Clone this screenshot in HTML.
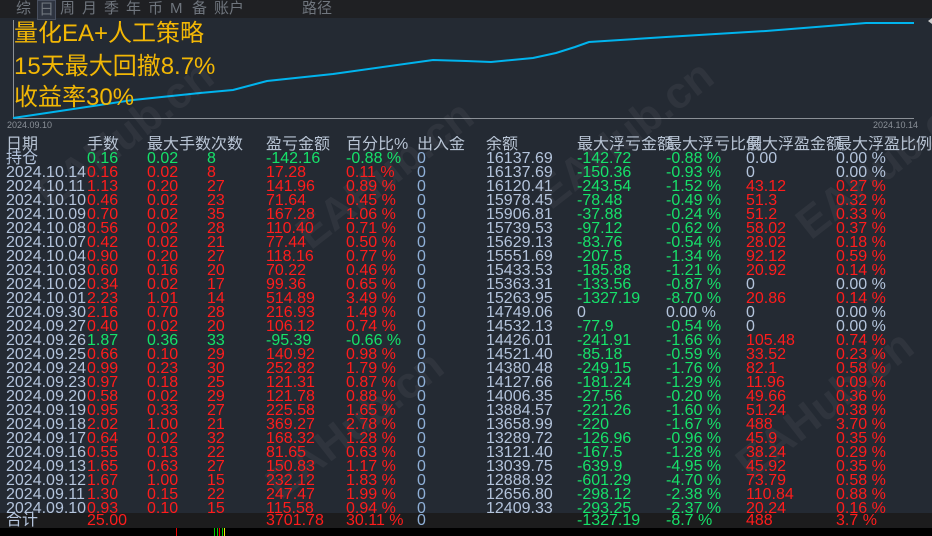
<!DOCTYPE html>
<html><head><meta charset="utf-8"><style>
*{margin:0;padding:0;box-sizing:border-box}
body{width:932px;height:536px;overflow:hidden;background:#242a33;font-family:"Liberation Sans","Noto Sans CJK SC",sans-serif;position:relative}
.top{position:absolute;left:0;top:0;width:932px;height:18px;background:#1f2023}
.top span{position:absolute;top:0;font-size:15px;line-height:18px;color:#6f757d}
.sel{border:1px solid #4a5160;background:#2e3440;padding:0 1px}
.ttl{position:absolute;left:14px;color:#f2b705;font-size:24px;line-height:28px;white-space:nowrap}
.ax{position:absolute;font-size:9px;color:#8a9098}
.tbl{position:absolute;left:0;top:136px;width:932px;height:377px;overflow:hidden}
.r{position:absolute;left:0;height:14px;width:932px;font-size:16px;line-height:14px;white-space:nowrap}
.r span{position:absolute;top:0}
.c0{left:6px}.c1{left:87px}.c2{left:147px}.c3{left:207px}.c4{left:266px}.c5{left:346px}.c6{left:417px}.c7{left:486px}.c8{left:577px}.c9{left:666px}.c10{left:746px}.c11{left:836px}
.h span{color:#b8c4d4}
.W{color:#b4c4dc}.R{color:#ff1c1c}.G{color:#16e26a}.Z{color:#8fb0d8}
.foot{position:absolute;left:0;top:513px;width:932px;height:15px;background:#1c1c1d}
.bot{position:absolute;left:0;top:528px;width:932px;height:8px;background:#000}
.wm{position:absolute;font-size:44px;font-weight:bold;color:rgba(255,255,255,0.05);transform:rotate(-38deg);white-space:nowrap}
</style></head><body>
<div class="top">
<span style="left:16px">综</span><span class="sel" style="left:37px">日</span><span style="left:60px">周</span><span style="left:82px">月</span><span style="left:104px">季</span><span style="left:126px">年</span><span style="left:148px">币</span><span style="left:170px">M</span><span style="left:192px">备</span><span style="left:214px">账户</span><span style="left:302px">路径</span>
</div>
<svg style="position:absolute;left:0;top:18px" width="932" height="110">
<line x1="13.5" y1="2" x2="13.5" y2="100" stroke="#8a8f96" stroke-width="1"/>
<line x1="13" y1="100.5" x2="914" y2="100.5" stroke="#8a8f96" stroke-width="1"/>
<polyline fill="none" stroke="#00b4ee" stroke-width="2" points="13,100 60,93 133,82 200,75 233,72 267,63 333,56 433,42 466,43 491,44 533,40 556,35 575,29 589,24 666,19 766,13 866,5 914,5"/>
<polygon points="928,3 932,0 932,6" fill="#ccc"/>
</svg>
<div class="ttl" style="top:20px">量化EA+人工策略</div>
<div class="ttl" style="top:53px">15天最大回撤8.7%</div>
<div class="ttl" style="top:84px">收益率30%</div>
<div class="ax" style="left:7px;top:120px">2024.09.10</div>
<div class="ax" style="left:873px;top:120px">2024.10.14</div>
<div class="wm" style="left:20px;top:110px">EAHub.cn</div>
<div class="wm" style="left:280px;top:150px">EAHub.cn</div>
<div class="wm" style="left:520px;top:110px">EAHub.cn</div>
<div class="wm" style="left:780px;top:140px">EAHub.cn</div>
<div class="wm" style="left:250px;top:400px">EAHub.cn</div>
<div class="wm" style="left:720px;top:380px">EAHub.cn</div>
<div class="tbl">
<div class="r h" style="top:2px"><span class="c0">日期</span><span class="c1">手数</span><span class="c2">最大手数次数</span><span class="c4">盈亏金额</span><span class="c5">百分比%</span><span class="c6">出入金</span><span class="c7">余额</span><span class="c8">最大浮亏金额</span><span class="c9">最大浮亏比例</span><span class="c10">最大浮盈金额</span><span class="c11">最大浮盈比例</span></div>
<div class="r" style="top:16px"><span class="c0 W">持仓</span><span class="c1 G">0.16</span><span class="c2 G">0.02</span><span class="c3 G">8</span><span class="c4 G">-142.16</span><span class="c5 G">-0.88 %</span><span class="c6 Z">0</span><span class="c7 W">16137.69</span><span class="c8 G">-142.72</span><span class="c9 G">-0.88 %</span><span class="c10 W">0.00</span><span class="c11 W">0.00 %</span></div>
<div class="r" style="top:30px"><span class="c0 W">2024.10.14</span><span class="c1 R">0.16</span><span class="c2 R">0.02</span><span class="c3 R">8</span><span class="c4 R">17.28</span><span class="c5 R">0.11 %</span><span class="c6 Z">0</span><span class="c7 W">16137.69</span><span class="c8 G">-150.36</span><span class="c9 G">-0.93 %</span><span class="c10 W">0</span><span class="c11 W">0.00 %</span></div>
<div class="r" style="top:44px"><span class="c0 W">2024.10.11</span><span class="c1 R">1.13</span><span class="c2 R">0.20</span><span class="c3 R">27</span><span class="c4 R">141.96</span><span class="c5 R">0.89 %</span><span class="c6 Z">0</span><span class="c7 W">16120.41</span><span class="c8 G">-243.54</span><span class="c9 G">-1.52 %</span><span class="c10 R">43.12</span><span class="c11 R">0.27 %</span></div>
<div class="r" style="top:58px"><span class="c0 W">2024.10.10</span><span class="c1 R">0.46</span><span class="c2 R">0.02</span><span class="c3 R">23</span><span class="c4 R">71.64</span><span class="c5 R">0.45 %</span><span class="c6 Z">0</span><span class="c7 W">15978.45</span><span class="c8 G">-78.48</span><span class="c9 G">-0.49 %</span><span class="c10 R">51.3</span><span class="c11 R">0.32 %</span></div>
<div class="r" style="top:72px"><span class="c0 W">2024.10.09</span><span class="c1 R">0.70</span><span class="c2 R">0.02</span><span class="c3 R">35</span><span class="c4 R">167.28</span><span class="c5 R">1.06 %</span><span class="c6 Z">0</span><span class="c7 W">15906.81</span><span class="c8 G">-37.88</span><span class="c9 G">-0.24 %</span><span class="c10 R">51.2</span><span class="c11 R">0.33 %</span></div>
<div class="r" style="top:86px"><span class="c0 W">2024.10.08</span><span class="c1 R">0.56</span><span class="c2 R">0.02</span><span class="c3 R">28</span><span class="c4 R">110.40</span><span class="c5 R">0.71 %</span><span class="c6 Z">0</span><span class="c7 W">15739.53</span><span class="c8 G">-97.12</span><span class="c9 G">-0.62 %</span><span class="c10 R">58.02</span><span class="c11 R">0.37 %</span></div>
<div class="r" style="top:100px"><span class="c0 W">2024.10.07</span><span class="c1 R">0.42</span><span class="c2 R">0.02</span><span class="c3 R">21</span><span class="c4 R">77.44</span><span class="c5 R">0.50 %</span><span class="c6 Z">0</span><span class="c7 W">15629.13</span><span class="c8 G">-83.76</span><span class="c9 G">-0.54 %</span><span class="c10 R">28.02</span><span class="c11 R">0.18 %</span></div>
<div class="r" style="top:114px"><span class="c0 W">2024.10.04</span><span class="c1 R">0.90</span><span class="c2 R">0.20</span><span class="c3 R">27</span><span class="c4 R">118.16</span><span class="c5 R">0.77 %</span><span class="c6 Z">0</span><span class="c7 W">15551.69</span><span class="c8 G">-207.5</span><span class="c9 G">-1.34 %</span><span class="c10 R">92.12</span><span class="c11 R">0.59 %</span></div>
<div class="r" style="top:128px"><span class="c0 W">2024.10.03</span><span class="c1 R">0.60</span><span class="c2 R">0.16</span><span class="c3 R">20</span><span class="c4 R">70.22</span><span class="c5 R">0.46 %</span><span class="c6 Z">0</span><span class="c7 W">15433.53</span><span class="c8 G">-185.88</span><span class="c9 G">-1.21 %</span><span class="c10 R">20.92</span><span class="c11 R">0.14 %</span></div>
<div class="r" style="top:142px"><span class="c0 W">2024.10.02</span><span class="c1 R">0.34</span><span class="c2 R">0.02</span><span class="c3 R">17</span><span class="c4 R">99.36</span><span class="c5 R">0.65 %</span><span class="c6 Z">0</span><span class="c7 W">15363.31</span><span class="c8 G">-133.56</span><span class="c9 G">-0.87 %</span><span class="c10 W">0</span><span class="c11 W">0.00 %</span></div>
<div class="r" style="top:156px"><span class="c0 W">2024.10.01</span><span class="c1 R">2.23</span><span class="c2 R">1.01</span><span class="c3 R">14</span><span class="c4 R">514.89</span><span class="c5 R">3.49 %</span><span class="c6 Z">0</span><span class="c7 W">15263.95</span><span class="c8 G">-1327.19</span><span class="c9 G">-8.70 %</span><span class="c10 R">20.86</span><span class="c11 R">0.14 %</span></div>
<div class="r" style="top:170px"><span class="c0 W">2024.09.30</span><span class="c1 R">2.16</span><span class="c2 R">0.70</span><span class="c3 R">28</span><span class="c4 R">216.93</span><span class="c5 R">1.49 %</span><span class="c6 Z">0</span><span class="c7 W">14749.06</span><span class="c8 W">0</span><span class="c9 W">0.00 %</span><span class="c10 W">0</span><span class="c11 W">0.00 %</span></div>
<div class="r" style="top:184px"><span class="c0 W">2024.09.27</span><span class="c1 R">0.40</span><span class="c2 R">0.02</span><span class="c3 R">20</span><span class="c4 R">106.12</span><span class="c5 R">0.74 %</span><span class="c6 Z">0</span><span class="c7 W">14532.13</span><span class="c8 G">-77.9</span><span class="c9 G">-0.54 %</span><span class="c10 W">0</span><span class="c11 W">0.00 %</span></div>
<div class="r" style="top:198px"><span class="c0 W">2024.09.26</span><span class="c1 G">1.87</span><span class="c2 G">0.36</span><span class="c3 G">33</span><span class="c4 G">-95.39</span><span class="c5 G">-0.66 %</span><span class="c6 Z">0</span><span class="c7 W">14426.01</span><span class="c8 G">-241.91</span><span class="c9 G">-1.66 %</span><span class="c10 R">105.48</span><span class="c11 R">0.74 %</span></div>
<div class="r" style="top:212px"><span class="c0 W">2024.09.25</span><span class="c1 R">0.66</span><span class="c2 R">0.10</span><span class="c3 R">29</span><span class="c4 R">140.92</span><span class="c5 R">0.98 %</span><span class="c6 Z">0</span><span class="c7 W">14521.40</span><span class="c8 G">-85.18</span><span class="c9 G">-0.59 %</span><span class="c10 R">33.52</span><span class="c11 R">0.23 %</span></div>
<div class="r" style="top:226px"><span class="c0 W">2024.09.24</span><span class="c1 R">0.99</span><span class="c2 R">0.23</span><span class="c3 R">30</span><span class="c4 R">252.82</span><span class="c5 R">1.79 %</span><span class="c6 Z">0</span><span class="c7 W">14380.48</span><span class="c8 G">-249.15</span><span class="c9 G">-1.76 %</span><span class="c10 R">82.1</span><span class="c11 R">0.58 %</span></div>
<div class="r" style="top:240px"><span class="c0 W">2024.09.23</span><span class="c1 R">0.97</span><span class="c2 R">0.18</span><span class="c3 R">25</span><span class="c4 R">121.31</span><span class="c5 R">0.87 %</span><span class="c6 Z">0</span><span class="c7 W">14127.66</span><span class="c8 G">-181.24</span><span class="c9 G">-1.29 %</span><span class="c10 R">11.96</span><span class="c11 R">0.09 %</span></div>
<div class="r" style="top:254px"><span class="c0 W">2024.09.20</span><span class="c1 R">0.58</span><span class="c2 R">0.02</span><span class="c3 R">29</span><span class="c4 R">121.78</span><span class="c5 R">0.88 %</span><span class="c6 Z">0</span><span class="c7 W">14006.35</span><span class="c8 G">-27.56</span><span class="c9 G">-0.20 %</span><span class="c10 R">49.66</span><span class="c11 R">0.36 %</span></div>
<div class="r" style="top:268px"><span class="c0 W">2024.09.19</span><span class="c1 R">0.95</span><span class="c2 R">0.33</span><span class="c3 R">27</span><span class="c4 R">225.58</span><span class="c5 R">1.65 %</span><span class="c6 Z">0</span><span class="c7 W">13884.57</span><span class="c8 G">-221.26</span><span class="c9 G">-1.60 %</span><span class="c10 R">51.24</span><span class="c11 R">0.38 %</span></div>
<div class="r" style="top:282px"><span class="c0 W">2024.09.18</span><span class="c1 R">2.02</span><span class="c2 R">1.00</span><span class="c3 R">21</span><span class="c4 R">369.27</span><span class="c5 R">2.78 %</span><span class="c6 Z">0</span><span class="c7 W">13658.99</span><span class="c8 G">-220</span><span class="c9 G">-1.67 %</span><span class="c10 R">488</span><span class="c11 R">3.70 %</span></div>
<div class="r" style="top:296px"><span class="c0 W">2024.09.17</span><span class="c1 R">0.64</span><span class="c2 R">0.02</span><span class="c3 R">32</span><span class="c4 R">168.32</span><span class="c5 R">1.28 %</span><span class="c6 Z">0</span><span class="c7 W">13289.72</span><span class="c8 G">-126.96</span><span class="c9 G">-0.96 %</span><span class="c10 R">45.9</span><span class="c11 R">0.35 %</span></div>
<div class="r" style="top:310px"><span class="c0 W">2024.09.16</span><span class="c1 R">0.55</span><span class="c2 R">0.13</span><span class="c3 R">22</span><span class="c4 R">81.65</span><span class="c5 R">0.63 %</span><span class="c6 Z">0</span><span class="c7 W">13121.40</span><span class="c8 G">-167.5</span><span class="c9 G">-1.28 %</span><span class="c10 R">38.24</span><span class="c11 R">0.29 %</span></div>
<div class="r" style="top:324px"><span class="c0 W">2024.09.13</span><span class="c1 R">1.65</span><span class="c2 R">0.63</span><span class="c3 R">27</span><span class="c4 R">150.83</span><span class="c5 R">1.17 %</span><span class="c6 Z">0</span><span class="c7 W">13039.75</span><span class="c8 G">-639.9</span><span class="c9 G">-4.95 %</span><span class="c10 R">45.92</span><span class="c11 R">0.35 %</span></div>
<div class="r" style="top:338px"><span class="c0 W">2024.09.12</span><span class="c1 R">1.67</span><span class="c2 R">1.00</span><span class="c3 R">15</span><span class="c4 R">232.12</span><span class="c5 R">1.83 %</span><span class="c6 Z">0</span><span class="c7 W">12888.92</span><span class="c8 G">-601.29</span><span class="c9 G">-4.70 %</span><span class="c10 R">73.79</span><span class="c11 R">0.58 %</span></div>
<div class="r" style="top:352px"><span class="c0 W">2024.09.11</span><span class="c1 R">1.30</span><span class="c2 R">0.15</span><span class="c3 R">22</span><span class="c4 R">247.47</span><span class="c5 R">1.99 %</span><span class="c6 Z">0</span><span class="c7 W">12656.80</span><span class="c8 G">-298.12</span><span class="c9 G">-2.38 %</span><span class="c10 R">110.84</span><span class="c11 R">0.88 %</span></div>
<div class="r" style="top:366px"><span class="c0 W">2024.09.10</span><span class="c1 R">0.93</span><span class="c2 R">0.10</span><span class="c3 R">15</span><span class="c4 R">115.58</span><span class="c5 R">0.94 %</span><span class="c6 Z">0</span><span class="c7 W">12409.33</span><span class="c8 G">-293.25</span><span class="c9 G">-2.37 %</span><span class="c10 R">20.24</span><span class="c11 R">0.16 %</span></div>
</div>
<div class="foot"><div class="r" style="top:1px"><span class="c0 W">合计</span><span class="c1 R">25.00</span><span class="c4 R">3701.78</span><span class="c5 R">30.11 %</span><span class="c6 Z">0</span><span class="c8 G">-1327.19</span><span class="c9 G">-8.7 %</span><span class="c10 R">488</span><span class="c11 R">3.7 %</span></div></div>
<div class="bot">
<div style="position:absolute;left:176px;top:0;width:1px;height:8px;background:#e00"></div>
<div style="position:absolute;left:214px;top:0;width:1px;height:8px;background:#0c0"></div>
<div style="position:absolute;left:217px;top:0;width:1px;height:8px;background:#0c0"></div>
<div style="position:absolute;left:219px;top:0;width:1px;height:8px;background:#e00"></div>
<div style="position:absolute;left:222px;top:0;width:1px;height:8px;background:#0c0"></div>
<div style="position:absolute;left:224px;top:0;width:1px;height:8px;background:#ee0"></div>
</div>
</body></html>
